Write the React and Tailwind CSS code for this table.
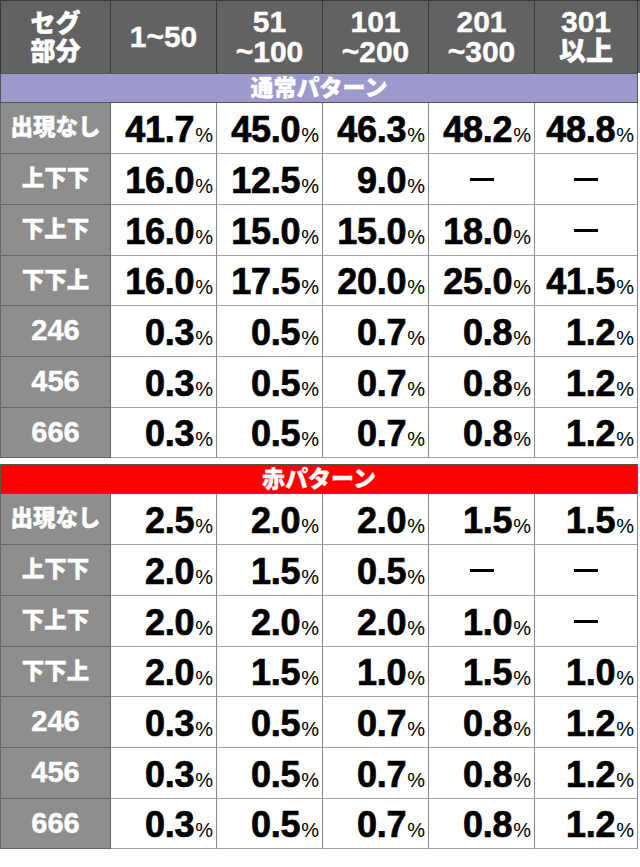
import React from "react";

const FONT = { fontFamily: '"Liberation Sans", "Noto Sans CJK JP", Arial, sans-serif' };

const normal = [
  ["出現なし", ["41.7", "45.0", "46.3", "48.2", "48.8"]],
  ["上下下", ["16.0", "12.5", "9.0", null, null]],
  ["下上下", ["16.0", "15.0", "15.0", "18.0", null]],
  ["下下上", ["16.0", "17.5", "20.0", "25.0", "41.5"]],
  ["246", ["0.3", "0.5", "0.7", "0.8", "1.2"]],
  ["456", ["0.3", "0.5", "0.7", "0.8", "1.2"]],
  ["666", ["0.3", "0.5", "0.7", "0.8", "1.2"]],
];

const red = [
  ["出現なし", ["2.5", "2.0", "2.0", "1.5", "1.5"]],
  ["上下下", ["2.0", "1.5", "0.5", null, null]],
  ["下上下", ["2.0", "2.0", "2.0", "1.0", null]],
  ["下下上", ["2.0", "1.5", "1.0", "1.5", "1.0"]],
  ["246", ["0.3", "0.5", "0.7", "0.8", "1.2"]],
  ["456", ["0.3", "0.5", "0.7", "0.8", "1.2"]],
  ["666", ["0.3", "0.5", "0.7", "0.8", "1.2"]],
];

const heights = ["h-[51px]", "h-[51px]", "h-[51px]", "h-[50px]", "h-[51px]", "h-[51px]", "h-[50px]"];
const widths = ["w-[106px]", "w-[106px]", "w-[106px]", "w-[106px]", "w-[103px]"];

function Header() {
  const cols = [["1~50"], ["51", "~100"], ["101", "~200"], ["201", "~300"], ["301", "以上"]];
  return (
    <div className="flex h-[73px] bg-[#626262] border-t border-[#3a3a3a]">
      <div className="w-[111px] shrink-0 border-l border-r border-[#3a3a3a] flex flex-col items-center justify-center text-white font-black text-[25px] leading-[28px] [-webkit-text-stroke:0.4px_white]">
        <span>セグ</span>
        <span>部分</span>
      </div>
      {cols.map((c, i) => (
        <div
          key={i}
          className={`${widths[i]} shrink-0 border-r border-[#3a3a3a] flex flex-col items-center justify-center text-white font-bold text-[30px] leading-[30px] [-webkit-text-stroke:0.4px_white]`}
        >
          {c.map((l, j) => (
            <span key={j} className={l === "以上" ? "text-[27px] font-black" : ""}>
              {l}
            </span>
          ))}
        </div>
      ))}
    </div>
  );
}

function Band({ label, color }) {
  return (
    <div
      className={`h-[30px] w-[638px] border border-[#555] ${color} flex items-center justify-center text-white font-black text-[23px] leading-none [-webkit-text-stroke:0.3px_white]`}
    >
      {label}
    </div>
  );
}

function Row({ label, values, h }) {
  const numeric = /^\d+$/.test(label);
  return (
    <div className={`flex ${h}`}>
      <div
        className={`w-[111px] shrink-0 bg-[#8e8e8e] border-l border-r border-b border-[#666] flex items-center justify-center text-white [-webkit-text-stroke:0.4px_white] ${
          numeric ? "text-[29px] font-bold" : "text-[22.5px] font-black"
        }`}
      >
        {label}
      </div>
      {values.map((v, i) => (
        <div
          key={i}
          className={`${widths[i]} shrink-0 bg-white border-r border-b border-r-[#888] border-b-[#a0a0a0] flex items-center ${
            v ? "justify-end pr-[3px]" : "justify-center"
          }`}
        >
          {v ? (
            <span className="text-black leading-none flex items-baseline pt-[3px]">
              <span className="text-[36px] font-bold tracking-[-0.3px] [-webkit-text-stroke:0.7px_black]">{v}</span>
              <span className="text-[20px] font-normal ml-[1px]">%</span>
            </span>
          ) : (
            <div className="w-[24px] h-[3px] bg-black" />
          )}
        </div>
      ))}
    </div>
  );
}

export default function App() {
  return (
    <div className="w-[640px] h-[867px] bg-white overflow-hidden" style={FONT}>
      <Header />
      <Band label="通常パターン" color="bg-[#9c99cc]" />
      {normal.map(([l, v], i) => (
        <Row key={i} label={l} values={v} h={heights[i]} />
      ))}
      <div className="h-[6px]" />
      <Band label="赤パターン" color="bg-[#ff0000]" />
      {red.map(([l, v], i) => (
        <Row key={i} label={l} values={v} h={heights[i]} />
      ))}
    </div>
  );
}
